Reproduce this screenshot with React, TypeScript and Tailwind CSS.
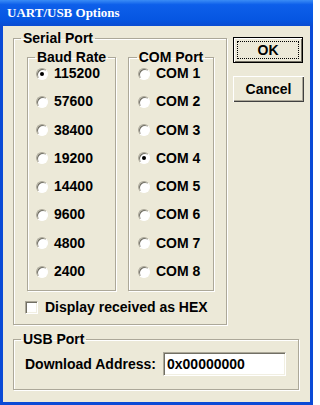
const BAUD = ["115200", "57600", "38400", "19200", "14400", "9600", "4800", "2400"];
const PORTS = ["COM 1", "COM 2", "COM 3", "COM 4", "COM 5", "COM 6", "COM 7", "COM 8"];

// etched group-box line: gray line with a white one offset by a pixel
const groupClass =
  "border border-[#aca899] shadow-[inset_1px_1px_0_#fff,1px_1px_0_#fff]";

const raised =
  "shadow-[inset_1px_1px_0_#fff,inset_-1px_-1px_0_#404040,inset_-2px_-2px_0_#aca899]";

function Radio({ checked }: { checked?: boolean }) {
  return (
    <span className="flex h-[12px] w-[12px] shrink-0 items-center justify-center rounded-full border border-t-[#aca899] border-l-[#aca899] border-b-white border-r-white bg-white shadow-[inset_1px_1px_0_#716f64]">
      {checked && <span className="h-[4px] w-[4px] rounded-full bg-black" />}
    </span>
  );
}

function RadioGroup({
  title,
  items,
  selected,
  width,
  padLeft,
}: {
  title: string;
  items: string[];
  selected: string;
  width: string;
  padLeft: string;
}) {
  return (
    <fieldset className={`${groupClass} ${width} h-[242px]`}>
      <legend className="mx-auto px-[2px] leading-[16px]">{title}</legend>
      <div className={`flex flex-col gap-[11.3px] ${padLeft}`}>
        {items.map((item) => (
          <label key={item} className="flex h-[17px] items-center gap-[6px]">
            <Radio checked={item === selected} />
            <span>{item}</span>
          </label>
        ))}
      </div>
    </fieldset>
  );
}

export default function App() {
  return (
    <div className="h-[405px] w-[313px] overflow-hidden bg-[#0a4ad6] font-['Liberation_Sans',Arial,sans-serif] text-[14px] font-bold text-black">
      {/* ── Title bar ── */}
      <div className="flex h-[26px] items-center bg-[linear-gradient(to_bottom,#3a8cf6,#0d5fea_18%,#0656e2_75%,#0a4cd2)] pl-[7px]">
        <span className="font-['Liberation_Serif',serif] text-[13px] font-bold text-white">
          UART/USB Options
        </span>
      </div>

      {/* ── Dialog body ── */}
      <div className="mx-[3px] flex h-[376px] flex-col bg-[#ece9d8] pl-[10px] pt-[4px]">
        <div className="flex items-start">
          <fieldset className={`${groupClass} h-[295px] w-[214px] pl-[13px]`}>
            <legend className="ml-[-6px] px-[2px] leading-[16px]">Serial Port</legend>
            <div className="mt-[3px] flex gap-[12px]">
              <RadioGroup title="Baud Rate" items={BAUD} selected="115200" width="w-[89px]" padLeft="pl-[8px]" />
              <RadioGroup title="COM Port" items={PORTS} selected="COM 4" width="w-[86px]" padLeft="pl-[9px]" />
            </div>
            <label className="ml-[-2px] mt-[8px] flex h-[16px] items-center gap-[7px]">
              <span className="h-[13px] w-[13px] shrink-0 border border-t-[#aca899] border-l-[#aca899] border-b-white border-r-white bg-white shadow-[inset_1px_1px_0_#716f64,inset_-1px_-1px_0_#f1efe2]" />
              <span>Display received as HEX</span>
            </label>
          </fieldset>

          <div className="ml-[6px] mt-[7px] flex flex-col gap-[13px]">
            <button className="h-[26px] w-[70px] border border-black bg-[#ece9d8] p-[3px] shadow-[inset_1px_1px_0_#fff,inset_-1px_-1px_0_#716f64]">
              <span className="flex h-full w-full items-center justify-center border border-dotted border-black">
                OK
              </span>
            </button>
            <button className={`h-[26px] w-[71px] bg-[#ece9d8] ${raised}`}>Cancel</button>
          </div>
        </div>

        <fieldset className={`${groupClass} mt-[6px] h-[59px] w-[286px] pl-[11px]`}>
          <legend className="ml-[-4px] px-[2px] leading-[16px]">USB Port</legend>
          <div className="mt-[5px] flex h-[24px] items-center">
            <span className="w-[138px]">Download Address:</span>
            <div className="flex h-[24px] w-[123px] items-center border border-t-[#aca899] border-l-[#aca899] border-b-white border-r-white bg-white pl-[3px] shadow-[inset_1px_1px_0_#716f64,inset_-1px_-1px_0_#f1efe2]">
              0x00000000
            </div>
          </div>
        </fieldset>
      </div>
    </div>
  );
}
